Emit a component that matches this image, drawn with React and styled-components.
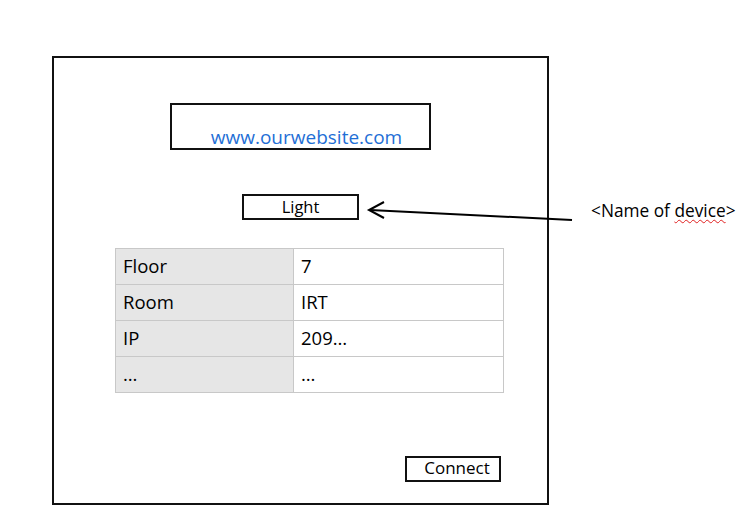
import React from 'react';
import styled, { createGlobalStyle } from 'styled-components';

const GlobalStyle = createGlobalStyle`
    html, body {
        margin: 0;
        padding: 0;
        background: #fff;
    }
    body {
        font-family: "Open Sans", Lato, "Liberation Sans", sans-serif;
        color: #000;
    }
`;

const Page = styled.div`
    position: relative;
    width: 752px;
    height: 521px;
    display: flex;
    align-items: flex-start;
    padding: 56px 0 0 52px;
    box-sizing: border-box;
`;

const Frame = styled.div`
    width: 497px;
    height: 449px;
    box-sizing: border-box;
    border: 2px solid #111;
    display: flex;
    flex-direction: column;
    align-items: center;
    padding-top: 45px;
`;

const Box = styled.div`
    box-sizing: border-box;
    border: 2px solid #111;
    width: ${p => p.w}px;
    height: ${p => p.h}px;
    display: flex;
    justify-content: center;
    align-items: ${p => p.bottom ? 'flex-end' : 'center'};
    font-size: ${p => p.size || 16}px;
    line-height: 1;
    color: ${p => p.color || '#000'};
    padding-bottom: ${p => p.bottom ? '1px' : '0'};
`;

const WebsiteBox = styled(Box)`
    margin-bottom: 44px;
    padding-left: 12px;
`;

const DeviceBox = styled(Box)`
    margin-bottom: 28px;
`;

const Table = styled.div`
    align-self: flex-start;
    margin-left: 61px;
    display: grid;
    grid-template-columns: 178px 210px;
    border-top: 1px solid #c8c8c8;
    border-left: 1px solid #c8c8c8;
`;

const Cell = styled.div`
    height: 36px;
    box-sizing: border-box;
    border-right: 1px solid #c8c8c8;
    border-bottom: 1px solid #c8c8c8;
    background: ${p => p.shade ? '#e6e6e6' : '#fff'};
    display: flex;
    align-items: center;
    padding: 0 0 2px 7px;
    font-size: 18.5px;
`;

const ConnectButton = styled(Box)`
    align-self: flex-end;
    margin-top: auto;
    margin-right: 46px;
    margin-bottom: 21px;
    padding: 0 0 3px 8px;
`;

const Note = styled.div`
    margin-left: 42px;
    margin-top: 143px;
    font-size: 17.3px;
    white-space: nowrap;
`;

const Squiggle = styled.span`
    text-decoration: underline wavy #e02020;
    text-decoration-thickness: 1px;
    text-underline-offset: 2px;
`;

const Overlay = styled.svg`
    position: absolute;
    left: 0;
    top: 0;
    pointer-events: none;
`;

const rows = [
    ['Floor', '7'],
    ['Room', 'IRT'],
    ['IP', '209…'],
    ['…', '…'],
];

export default function App() {
    return (
        <>
            <GlobalStyle />
            <Page>
                <Frame>
                    <WebsiteBox w={261} h={47} size={19} color="#1f6fd6" bottom>www.ourwebsite.com</WebsiteBox>
                    <DeviceBox w={117} h={26} size={16.5}>Light</DeviceBox>
                    <Table>
                        {rows.map(([k, v]) => (
                            <React.Fragment key={k + v}>
                                <Cell shade>{k}</Cell>
                                <Cell>{v}</Cell>
                            </React.Fragment>
                        ))}
                    </Table>
                    <ConnectButton w={96} h={26} size={17}>Connect</ConnectButton>
                </Frame>
                <Note>&lt;Name of <Squiggle>device</Squiggle>&gt;</Note>
                <Overlay width="752" height="521" viewBox="0 0 752 521">
                    <line x1="370" y1="210" x2="572" y2="220" stroke="#000" strokeWidth="2" />
                    <polyline points="384,202 369,210 384,218" fill="none" stroke="#000" strokeWidth="2" />
                </Overlay>
            </Page>
        </>
    );
}
